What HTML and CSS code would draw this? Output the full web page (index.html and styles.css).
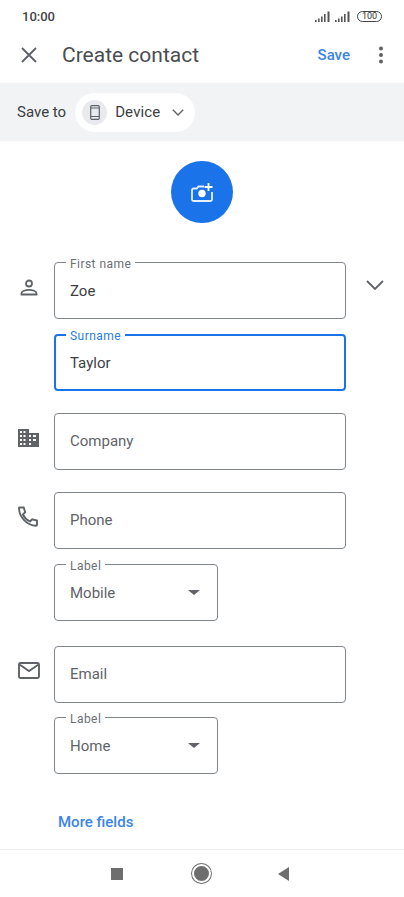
FILE: index.html
```html
<!DOCTYPE html>
<html lang="en">
<head>
<meta charset="utf-8">
<title>Create contact</title>
<link rel="stylesheet" href="styles.css">
</head>
<body>
<div class="screen">
  <div class="status">
    <span class="time">10:00</span>
    <div class="status-icons">
      <svg class="signal" viewBox="0 0 16 11" width="16" height="11"><path d="M0 9h1.6v2H0zM3 7.5h1.6V11H3zM6 5.500h1.600V11H6zM9 3h1.600v8H9zM12.500 .5h2v10.500h-2z" fill="#555"/></svg>
      <svg class="signal" viewBox="0 0 16 11" width="16" height="11"><path d="M0 9h1.6v2H0zM3 7.5h1.6V11H3zM6 5.500h1.600V11H6zM9 3h1.600v8H9zM12.500 .5h2v10.500h-2z" fill="#555"/></svg>
      <span class="battery">100</span>
    </div>
  </div>
  <header class="toolbar">
    <svg class="close" viewBox="0 0 16 16" width="16" height="16"><path d="M1 1l14 14M15 1L1 15" stroke="#5f6368" stroke-width="1.900" fill="none"/></svg>
    <h1 class="title">Create contact</h1>
    <span class="save">Save</span>
    <svg class="more" viewBox="0 0 4 18" width="4" height="18"><circle cx="2" cy="2.500" r="2" fill="#5f6368"/><circle cx="2" cy="9" r="2" fill="#5f6368"/><circle cx="2" cy="15.500" r="2" fill="#5f6368"/></svg>
  </header>
  <div class="savebar">
    <span class="saveto">Save to</span>
    <div class="chip">
      <span class="chip-icon">
        <svg viewBox="0 0 10 15" width="10" height="15"><path d="M1.700 .7h6.600a1 1 0 0 1 1 1v11.600a1 1 0 0 1-1 1H1.700a1 1 0 0 1-1-1V1.700a1 1 0 0 1 1-1zM.7 3h8.600M.7 11.500h8.600" stroke="#5f6368" stroke-width="1.200" fill="none"/></svg>
      </span>
      <span class="chip-text">Device</span>
      <svg viewBox="0 0 12 7" width="12" height="7"><path d="M.8 .8L6 6l5.200-5.200" stroke="#5f6368" stroke-width="1.400" fill="none"/></svg>
    </div>
  </div>
  <div class="avatar-wrap">
    <div class="avatar">
      <svg viewBox="0 0 22 20" width="22" height="20"><path d="M13 4.500H7.500L5.700 6.500H2.500A1.500 1.500 0 0 0 1 8v9.500A1.500 1.500 0 0 0 2.500 19h17a1.500 1.500 0 0 0 1.500-1.500V10" stroke="#e8f0fe" stroke-width="1.800" fill="none"/><circle cx="11" cy="11.500" r="3.700" fill="#fff"/><path d="M17.500 1v8M13.500 5h8" stroke="#fff" stroke-width="1.800"/></svg>
    </div>
  </div>
  <main class="form">
    <div class="row row-name">
      <svg class="icon icon-person" viewBox="0 0 18 17" width="18" height="17"><circle cx="9" cy="4.500" r="3" stroke="#5f6368" stroke-width="1.800" fill="none"/><path d="M1.500 15.500v-1.300c0-2 4-3.400 7.500-3.400s7.500 1.400 7.500 3.400v1.300z" stroke="#5f6368" stroke-width="1.800" fill="none"/></svg>
      <div class="field"><span class="float">First name</span><span class="value">Zoe</span></div>
      <svg class="expand" viewBox="0 0 18 10" width="18" height="10"><path d="M1 1l8 8 8-8" stroke="#5f6368" stroke-width="1.800" fill="none"/></svg>
    </div>
    <div class="row row-surname">
      <div class="field focused"><span class="float">Surname</span><span class="value">Taylor</span></div>
    </div>
    <div class="row row-company">
      <svg class="icon icon-company" viewBox="0 0 21 18" width="21" height="18"><path fill-rule="evenodd" fill="#5f6368" d="M0 0h11v4h10v14H0zM2 2v2h2V2zm3.500 0v2h2V2zM2 6v2h2V6zm3.500 0v2h2V6zM2 10v2h2v-2zm3.500 0v2h2v-2zM2 14v2h2v-2zm3.500 0v2h2v-2zM11 6v2h2V6zm0 4v2h2v-2zm0 4v2h2v-2zm4-8v2h3V6zm0 4v2h3v-2z"/></svg>
      <div class="field"><span class="placeholder">Company</span></div>
    </div>
    <div class="row row-phone">
      <svg class="icon icon-phone" viewBox="0 0 21 21" width="21" height="21"><path d="M1.500 1.500h4.200l1.500 4.800-2.300 2.200c1.500 3.300 3.800 5.500 7 7l2.300-2.200 4.800 1.200v4.200c0 .5-.4 1-1 1C9 19.500 1.500 11.500 1 2.500c0-.5 0-1 .5-1z" stroke="#5f6368" stroke-width="1.900" fill="none"/></svg>
      <div class="field"><span class="placeholder">Phone</span></div>
    </div>
    <div class="row row-label">
      <div class="field field-select"><span class="float">Label</span><span class="select-value">Mobile</span><span class="caret"></span></div>
    </div>
    <div class="row row-email">
      <svg class="icon icon-email" viewBox="0 0 22 17" width="22" height="17"><path d="M2.500 1h17A1.500 1.500 0 0 1 21 2.500v12a1.500 1.500 0 0 1-1.500 1.500h-17A1.500 1.500 0 0 1 1 14.500v-12A1.500 1.500 0 0 1 2.500 1zM1.500 2.500L11 9l9.500-6.500" stroke="#5f6368" stroke-width="1.900" fill="none"/></svg>
      <div class="field"><span class="placeholder">Email</span></div>
    </div>
    <div class="row row-label2">
      <div class="field field-select"><span class="float">Label</span><span class="select-value">Home</span><span class="caret"></span></div>
    </div>
    <div class="more-fields">More fields</div>
  </main>
  <nav class="navbar">
    <span class="nav-square"></span>
    <span class="nav-circle"></span>
    <span class="nav-back"></span>
  </nav>
</div>
</body>
</html>
```
FILE: styles.css
```css
* { box-sizing: border-box; }
html, body { margin: 0; padding: 0; background: #fff; }
body { font-family: Roboto, "Noto Sans", sans-serif; color: #3c4043; }
.screen { width: 404px; height: 897px; overflow: hidden; display: flex; flex-direction: column; }

.status { height: 32px; padding: 0 22px; display: flex; align-items: center; justify-content: space-between; }
.time { font-size: 13px; font-weight: 500; color: #444; }
.status-icons { display: flex; align-items: center; gap: 4px; }
.signal { display: block; }
.battery { width: 25px; height: 11px; margin-left: 2px; border: 1px solid #444; border-radius: 6px; font-size: 9px; line-height: 9px; text-align: center; color: #333; }

.toolbar { height: 51px; display: flex; align-items: center; padding: 0 21px 6px; }
.close { flex: none; }
.title { margin: 0 0 0 25px; font-size: 21px; font-weight: 400; color: #4a4d51; flex: 1; }
.save { font-size: 15px; font-weight: 500; color: #3a85e3; margin-right: 29px; }
.more { flex: none; }

.savebar { height: 58px; background: #f1f3f4; display: flex; align-items: center; padding-left: 17px; }
.saveto { font-size: 15px; color: #3c4043; margin-right: 9px; }
.chip { height: 39px; width: 120px; border-radius: 20px; background: #fff; display: flex; align-items: center; padding-left: 7px; }
.chip-icon { width: 25px; height: 25px; border-radius: 50%; background: #e8eaed; display: flex; align-items: center; justify-content: center; }
.chip-text { font-size: 15px; margin-left: 8px; margin-right: 12px; letter-spacing: .15px; color: #3c4043; }

.avatar-wrap { height: 121px; padding-top: 20px; display: flex; justify-content: center; }
.avatar { width: 62px; height: 62px; border-radius: 50%; background: #1a73e8; display: flex; align-items: center; justify-content: center; }

.form { flex: 1; display: flex; flex-direction: column; }
.row { position: relative; padding-left: 54px; display: flex; }
.row-surname { margin-top: 15px; }
.row-company { margin-top: 22px; }
.row-phone { margin-top: 22px; }
.row-label { margin-top: 15px; }
.row-email { margin-top: 25px; }
.row-label2 { margin-top: 14px; }

.icon { position: absolute; }
.icon-person { left: 20px; top: 17px; }
.icon-company { left: 18px; top: 16px; }
.icon-phone { left: 18px; top: 14px; }
.icon-email { left: 18px; top: 16px; }
.expand { position: absolute; left: 366px; top: 18px; }

.field { position: relative; width: 292px; height: 57px; border: 1px solid #80868b; border-radius: 4px; padding-left: 15px; display: flex; align-items: center; font-size: 15px; }
.field-select { width: 164px; }
.field.focused { border: 2px solid #1a73e8; padding-left: 14px; }
.float { position: absolute; left: 11px; top: -5px; padding: 0 4px; background: #fff; font-size: 12px; line-height: 13px; letter-spacing: .45px; color: #6b6f73; }
.focused .float { left: 10px; top: -6px; color: #2b7de0; }
.value { color: #3c4043; }
.placeholder, .select-value { color: #5f6368; }
.placeholder { padding-bottom: 1px; }
.caret { position: absolute; right: 17px; top: 25px; border-left: 6px solid transparent; border-right: 6px solid transparent; border-top: 5px solid #5f6368; }

.more-fields { margin: 39px 0 0 58px; font-size: 15px; font-weight: 500; line-height: 18px; color: #3a85e3; }

.navbar { height: 48px; border-top: 1px solid #f0f0f0; display: flex; align-items: center; justify-content: center; padding-right: 5px; }
.nav-square { width: 12px; height: 12px; background: #6e6e6e; margin-right: 69px; }
.nav-circle { width: 19px; height: 19px; border-radius: 50%; background: #6e6e6e; border: 2px solid #fff; box-shadow: 0 0 0 1px #6e6e6e; margin-right: 67px; }
.nav-back { width: 0; height: 0; border-top: 7px solid transparent; border-bottom: 7px solid transparent; border-right: 11px solid #6e6e6e; }
```
